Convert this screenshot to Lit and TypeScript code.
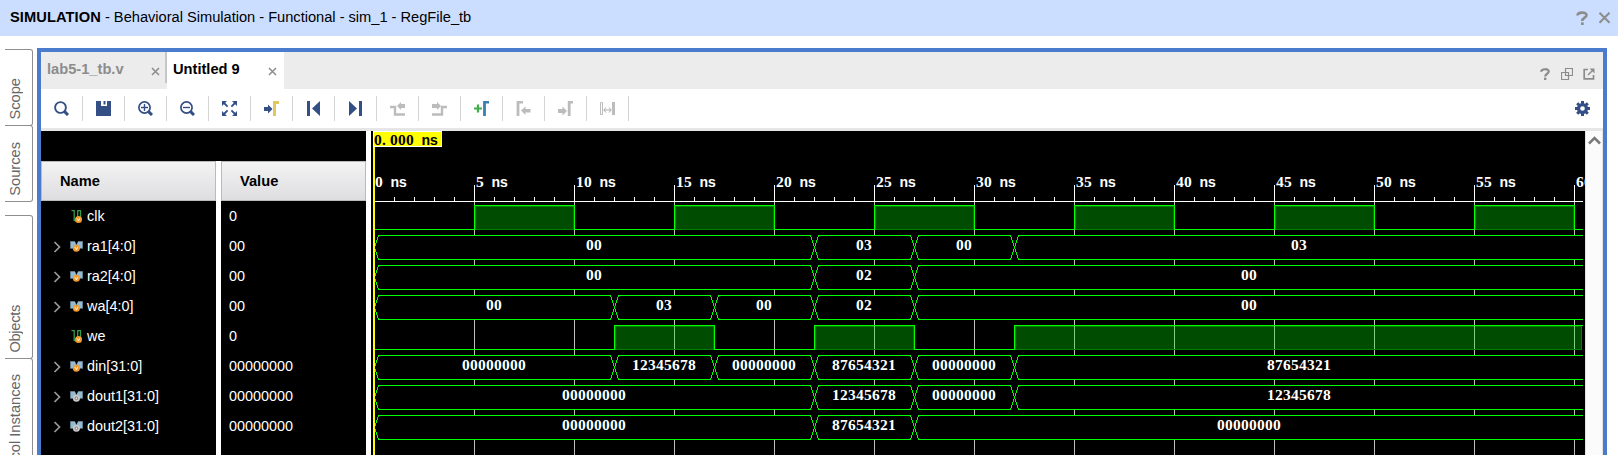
import { LitElement, html, svg, css } from "lit";
import { customElement, property } from "lit/decorators.js";

const NAVY = "#344f86";
const GRAY = "#bcbcbc";

const toolIcons = [
  svg`<circle cx="6.5" cy="6.5" r="5.4" fill="none" stroke=${NAVY} stroke-width="1.9"/><path d="M10.4 10.4 14 14" stroke=${NAVY} stroke-width="3"/>`,
  svg`<path d="M0 0H5V5H11V0H15V15H0Z" fill=${NAVY}/><path d="M7.500 0H9.500V3.500H7.500Z" fill=${NAVY}/>`,
  svg`<circle cx="6.5" cy="6.5" r="5.6" fill="none" stroke=${NAVY} stroke-width="1.7"/><path d="M10.6 10.6 14 14" stroke=${NAVY} stroke-width="3"/><path d="M3 6.500H10M6.500 3V10" stroke=${NAVY} stroke-width="1.4"/>`,
  svg`<circle cx="6.5" cy="6.5" r="5.6" fill="none" stroke=${NAVY} stroke-width="1.7"/><path d="M10.6 10.6 14 14" stroke=${NAVY} stroke-width="3"/><path d="M3 6.500H10" stroke=${NAVY} stroke-width="1.4"/>`,
  svg`<path d="M0 0H5L0 5ZM15 0V5L10 0ZM0 15V10L5 15ZM15 15H10L15 10Z" fill=${NAVY}/><path d="M2 2 5.600 5.600M13 2 9.400 5.600M2 13 5.600 9.400M13 13 9.400 9.400" stroke=${NAVY} stroke-width="1.8"/>`,
  svg`<path d="M0 6H4V3.500L8.500 8 4 12.500V10H0Z" fill=${NAVY}/><path d="M10.500 15V1.500H15" fill="none" stroke="#e0c75e" stroke-width="3"/>`,
  svg`<path d="M1 0H4V15H1ZM14 0V15L6 7.500Z" fill=${NAVY}/>`,
  svg`<path d="M1 0V15L9 7.500ZM11 0H14V15H11Z" fill=${NAVY}/>`,
  svg`<path d="M0 6H5V13.500H15" fill="none" stroke=${GRAY} stroke-width="2.400"/><path d="M7 5 11 1V3H15V7H11V9Z" fill=${GRAY}/>`,
  svg`<path d="M0 13.500H10V6H15" fill="none" stroke=${GRAY} stroke-width="2.400"/><path d="M9 5 5 1V3H0V7H5V9Z" fill=${GRAY}/>`,
  svg`<path d="M0 7.500H8M4 3.500V11.500" stroke="#3fae49" stroke-width="2.200"/><path d="M10.500 15V1.200H15" fill="none" stroke="#3b7fb0" stroke-width="2.800"/>`,
  svg`<path d="M2 15V1.200H7" fill="none" stroke=${GRAY} stroke-width="2.800"/><path d="M5 9.500 9.500 5.500V8H14.500V11.500H9.500V14Z" fill=${GRAY}/>`,
  svg`<path d="M11.200 15V1.200H15" fill="none" stroke=${GRAY} stroke-width="2.800"/><path d="M9 10 4.500 5.500V8H0V12H4.500V14.500Z" fill=${GRAY}/>`,
  svg`<path d="M.5 1.500H2.500V13.500H.5Z" fill="none" stroke=${GRAY}/><path d="M12 1H15V14H12Z" fill=${GRAY}/><path d="M4 9H11M6 6.500 3.800 9 6 11.500M9 6.500 11.200 9 9 11.500" fill="none" stroke="#a8a8a8"/>`,
];

interface Signal {
  name: string;
  value: string;
  kind: "bit" | "bus";
  port: "in" | "out";
  segs: [number, string][];
}

const signals: Signal[] = [
  { name: "clk", value: "0", kind: "bit", port: "in", segs: [[0, "0"], [5, "1"], [10, "0"], [15, "1"], [20, "0"], [25, "1"], [30, "0"], [35, "1"], [40, "0"], [45, "1"], [50, "0"], [55, "1"], [60, "0"]] },
  { name: "ra1[4:0]", value: "00", kind: "bus", port: "in", segs: [[0, "00"], [22, "03"], [27, "00"], [32, "03"]] },
  { name: "ra2[4:0]", value: "00", kind: "bus", port: "in", segs: [[0, "00"], [22, "02"], [27, "00"]] },
  { name: "wa[4:0]", value: "00", kind: "bus", port: "in", segs: [[0, "00"], [12, "03"], [17, "00"], [22, "02"], [27, "00"]] },
  { name: "we", value: "0", kind: "bit", port: "in", segs: [[0, "0"], [12, "1"], [17, "0"], [22, "1"], [27, "0"], [32, "1"]] },
  { name: "din[31:0]", value: "00000000", kind: "bus", port: "in", segs: [[0, "00000000"], [12, "12345678"], [17, "00000000"], [22, "87654321"], [27, "00000000"], [32, "87654321"]] },
  { name: "dout1[31:0]", value: "00000000", kind: "bus", port: "out", segs: [[0, "00000000"], [22, "12345678"], [27, "00000000"], [32, "12345678"]] },
  { name: "dout2[31:0]", value: "00000000", kind: "bus", port: "out", segs: [[0, "00000000"], [22, "87654321"], [27, "00000000"]] },
];

const badge = (port: string, x: number, y: number) =>
  port === "in"
    ? svg`<circle cx=${x} cy=${y} r="3.500" fill="#f29a2e"/><path d=${`M${x - 1.5} ${y - 1.5}L${x} ${y + 1.5}L${x + 1.5} ${y - 1.5}`} fill="none" stroke="#fff" stroke-width=".8"/>`
    : svg`<circle cx=${x} cy=${y} r="3.500" fill="#c9c9c9"/><circle cx=${x} cy=${y} r="1.300" fill="#eee" stroke="#777" stroke-width="1"/>`;

@customElement("wave-view")
export class WaveView extends LitElement {
  static styles = css`
    :host { display: block; background: #000; overflow: hidden; }
    svg { display: block; }
    text { font: bold 15.5px "Liberation Serif", serif; fill: #fff; white-space: pre; }
    .unit { font: bold 14.4px "Liberation Mono", monospace; }
    .dark { fill: #000; }
  `;

  // Canvas origin is the left edge of the view; time zero sits 3px in.
  private x(ns: number) {
    return 3 + ns * 20;
  }

  private label(str: string, x: number, y: number, cls = "") {
    const cut = str.indexOf(" ns");
    const digits = cut < 0 ? str : str.slice(0, cut);
    const pos = (n: number, from: number) => Array.from({ length: n }, (_, i) => from + i * 8).join(" ");
    return svg`<text class=${cls} y=${y} x=${pos(digits.length, x)}>${digits}${cut < 0 ? "" : svg`<tspan class="unit" x=${pos(3, x + digits.length * 8 - 0.5)}> ns</tspan>`}</text>`;
  }

  private bit(s: Signal, top: number) {
    const end = 1212;
    let line = "";
    const fills = s.segs.map(([t, v], i) => {
      const a = this.x(t) + 0.5;
      const last = i === s.segs.length - 1;
      const next = last ? 61 : s.segs[i + 1][0];
      const b = last ? end : this.x(next) + 0.5;
      const y = v === "1" ? top + 0.5 : top + 24.5;
      line += `${i ? "L" : "M"}${a} ${y}L${b} ${y}`;
      if (v !== "1") return null;
      const w = b - a - (last ? 1 : 0);
      const inner = Array.from({ length: 13 }, (_, k) => k * 5).filter((k) => k > t && k < next);
      return svg`<rect x=${a} y=${top + 0.5} width=${w} height="24" fill="#004c00"/>
        <rect x=${a + 1} y=${top + 1.5} width=${w - 2} height="23" fill="none" stroke="#008000"/>
        ${inner.map((k) => svg`<path d=${`M${this.x(k) + 0.5} ${top + 1}V${top + 25}`} stroke="#80cc80"/>`)}`;
    });
    return svg`${fills}<path d=${line} fill="none" stroke="#00ff00"/>
      ${s.segs.map(([t, v], i) => v === "1" ? svg`<path d=${`M${this.x(t) + 2} ${top + 24.5}H${(i < s.segs.length - 1 ? this.x(s.segs[i + 1][0]) : end - 1)}`} stroke="#008000"/>` : null)}`;
  }

  private bus(s: Signal, top: number) {
    const end = 1212;
    return s.segs.map(([t, v], i) => {
      const a = this.x(t) + 0.5;
      const last = i === s.segs.length - 1;
      const b = last ? end : this.x(s.segs[i + 1][0]) + 0.5;
      const y0 = top + 0.5;
      const y1 = top + 24.5;
      const right = last ? `H${b}M${b} ${y1}` : `H${b - 4}L${b} ${top + 12.5}L${b - 4} ${y1}`;
      return svg`<rect x=${a - 0.5} y=${top} width=${b - a + 1} height="25" fill="#000"/>
        <path d=${`M${a} ${top + 12.5}L${a + 4} ${y0}${right}H${a + 4}L${a} ${top + 12.5}`} fill="none" stroke="#00ff00"/>
        ${this.label(v, Math.round((a + b) / 2 - v.length * 4 - 0.5) + (last ? 1 : 0), top + 15)}`;
    });
  }

  render() {
    const ticks = Array.from({ length: 61 }, (_, i) => i);
    const major = ticks.filter((i) => i % 5 === 0);
    return html`<svg width="1214" height="324" shape-rendering="crispEdges">
      ${major.slice(1).map((i) => svg`<path d=${`M${this.x(i) + 0.5} 71V324`} stroke="#bebebe"/>`)}
      ${ticks.slice(1).map((i) => svg`<path d=${`M${this.x(i) + 0.5} ${i % 5 ? 66 : 54}V70`} stroke="#fff"/>`)}
      <path d="M3 70.500H1212" stroke="#fff"/>
      ${major.map((i) => this.label(`${i} ns`, this.x(i) + (i ? 2 : 1), 56))}
      ${signals.map((s, i) => (s.kind === "bit" ? this.bit(s, 74 + i * 30) : this.bus(s, 74 + i * 30)))}
      <rect x="2" y="1" width="2" height="323" fill="#ffff00"/>
      <rect x="2" y="0" width="69" height="16" fill="#fff"/>
      <rect x="3" y="1" width="67" height="14" fill="#ffff00"/>
      ${this.label("0.000 ns", 3, 14, "dark")}
    </svg>`;
  }
}

@customElement("signal-table")
export class SignalTable extends LitElement {
  static styles = css`
    :host { display: flex; flex-direction: column; background: #000; color: #fff; }
    .blank { height: 30px; }
    .cols { display: flex; flex: 1; gap: 5px; background: #fff; }
    .col { background: #000; }
    .name { width: 175px; }
    .value { width: 145px; }
    .head { box-sizing: border-box; height: 40px; border: 1px solid #b9babd; background: linear-gradient(#f3f3f4, #dedee1); color: #000; font-weight: bold; line-height: 38px; padding-left: 18px; }
    .row { display: flex; align-items: center; height: 30px; }
    .value .row { padding-left: 8px; }
    .cell { line-height: 30px; font-size: 14.4px; }
    .exp { width: 29px; height: 30px; flex: none; }
    .ico { width: 17px; height: 30px; flex: none; }
  `;

  private icon(s: Signal) {
    return s.kind === "bit"
      ? svg`<path d="M1.500 9.700H4.200V20M4.200 19.500H7.700V9.700H10.500V17" fill="none" stroke="#2f9e49" stroke-width="1.300"/>${badge(s.port, 8.5, 18.5)}`
      : svg`<path d="M.5 10.500H5L6.400 14 8 10.500H12.500V17.500H.5Z" fill="#93bcd4"/><path d="M.5 17.500V10.500H4.800M8.200 10.500H12.500V17.500" fill="none" stroke="#64808f"/>${badge(s.port, 6.400, 17.300)}`;
  }

  render() {
    return html`<div class="blank"></div>
      <div class="cols">
        <div class="col name">
          <div class="head">Name</div>
          ${signals.map((s) => html`<div class="row">
            <svg class="exp">${s.kind === "bus" ? svg`<path d="M13.500 11 18.500 16 13.500 21" fill="none" stroke="#9a9a9a" stroke-width="1.700"/>` : null}</svg>
            <svg class="ico">${this.icon(s)}</svg>
            <span class="cell">${s.name}</span>
          </div>`)}
        </div>
        <div class="col value">
          <div class="head">Value</div>
          ${signals.map((s) => html`<div class="row"><span class="cell">${s.value}</span></div>`)}
        </div>
      </div>`;
  }
}

@customElement("side-tab")
export class SideTab extends LitElement {
  @property() label = "";
  static styles = css`
    :host { box-sizing: border-box; flex: none; display: flex; align-items: flex-end; border: 1px solid #8e8e8e; border-left: 0; border-radius: 0 3px 3px 0; padding: 0 0 5px 0; color: #666; }
    .txt { writing-mode: vertical-rl; transform: rotate(180deg); white-space: nowrap; line-height: 20px; }
  `;
  render() {
    return html`<span class="txt">${this.label}</span>`;
  }
}

@customElement("app-root")
export class AppRoot extends LitElement {
  static styles = css`
    :host { display: flex; flex-direction: column; width: 1618px; height: 455px; overflow: hidden; background: #fff; color: #000; font: 14.67px "Liberation Sans", Arial, sans-serif; }
    .title { display: flex; align-items: center; height: 36px; flex: none; background: #ccdeff; padding: 0 7px 0 10px; }
    .title-text { flex: 1; white-space: pre; line-height: 34px; padding-bottom: 2px; letter-spacing: -.02px; }
    .title-text b { letter-spacing: .08px; }
    .title-icons { display: flex; gap: 9px; }
    .main { display: flex; flex: 1; min-height: 0; }
    .side { width: 28px; padding: 13px 4px 0 5px; display: flex; flex-direction: column; flex: none; }
    .t1 { height: 77px; }
    .t2 { height: 77px; margin-top: -1px; }
    .t3 { height: 144px; margin-top: 13px; letter-spacing: -.3px; }
    .t4 { height: 143px; margin-top: -1px; }
    .panel { box-sizing: border-box; width: 1570px; margin-top: 12px; border: 4px solid #4a7bcd; border-bottom: 0; display: flex; flex-direction: column; }
    .tabs { display: flex; height: 37px; flex: none; background: #ececec; }
    .tab { box-sizing: border-box; display: flex; align-items: center; justify-content: space-between; font-weight: bold; line-height: 34px; padding-bottom: 3px; }
    .tab svg { margin-top: 4px; }
    .idle { width: 126px; height: 31px; border-right: 2px solid #c6c6c6; padding: 3px 5px 0 6px; color: #8c8c8c; }
    .active { width: 117px; background: #fff; padding: 0 7px 3px 6px; }
    .tab-icons { display: flex; align-items: center; margin-left: auto; gap: 10px; padding: 7px 8px 0 0; }
    .tools { display: flex; align-items: center; height: 39px; flex: none; border-bottom: 3px solid #e6e6e6; }
    .tool { box-sizing: border-box; width: 42px; height: 25px; border-right: 1px solid #d4d4d4; display: flex; align-items: center; justify-content: center; }
    .gear { margin: 0 13px 0 auto; }
    .body { display: flex; flex: 1; min-height: 0; }
    signal-table { width: 325px; flex: none; }
    wave-view { width: 1214px; margin-left: 5px; flex: none; }
    .scroll { width: 16px; margin-left: auto; border-left: 1px solid #e4e4e4; border-right: 1px solid #e4e4e4; background: #fbfbfb; }
    svg { display: block; flex: none; }
  `;

  private close() {
    return html`<svg width="9" height="9"><path d="M1 1 8 8M8 1 1 8" stroke="#8c8c8c" stroke-width="1.500"/></svg>`;
  }

  render() {
    return html`
      <div class="title">
        <span class="title-text"><b>SIMULATION</b> - Behavioral Simulation - Functional - sim_1 - RegFile_tb</span>
        <div class="title-icons">
          <svg width="13" height="14"><path d="M1.500 4.500C1.500 .8 10.500 .6 10.500 4.200 10.500 6.700 6.200 6.500 6.200 10" fill="none" stroke="#8c8c8c" stroke-width="2.600"/><path d="M5 11.300H7.700V14H5Z" fill="#8c8c8c"/></svg>
          <svg width="13" height="14"><path d="M1.500 1.800 11.500 11.800M11.500 1.800 1.500 11.800" stroke="#8c8c8c" stroke-width="2"/></svg>
        </div>
      </div>
      <div class="main">
        <div class="side">
          <side-tab class="t1" label="Scope"></side-tab>
          <side-tab class="t2" label="Sources"></side-tab>
          <side-tab class="t3" label="Objects"></side-tab>
          <side-tab class="t4" label="Protocol Instances"></side-tab>
        </div>
        <div class="panel">
          <div class="tabs">
            <div class="tab idle">lab5-1_tb.v ${this.close()}</div>
            <div class="tab active">Untitled 9 ${this.close()}</div>
            <div class="tab-icons">
              <svg width="11" height="12"><path d="M1.200 3.800C1.200 .4 8.800 .4 8.800 3.600 8.800 5.800 5.200 5.800 5.200 8.500" fill="none" stroke="#8c8c8c" stroke-width="2.200"/><path d="M4 9.600H6.400V12H4Z" fill="#8c8c8c"/></svg>
              <svg width="12" height="12"><path d="M4.500 .5H11.500V7.500H4.500ZM.5 4.500H7.500V11.500H.5Z" fill="none" stroke="#8c8c8c" stroke-width="1.200"/></svg>
              <svg width="12" height="12"><path d="M5 1.500H1.200V10.800H10.500V7" fill="none" stroke="#8c8c8c" stroke-width="1.700"/><path d="M6.500 .5H11.500V5.500Z" fill="#8c8c8c"/><path d="M5 7 9.500 2.500" stroke="#8c8c8c" stroke-width="1.500"/></svg>
            </div>
          </div>
          <div class="tools">
            ${toolIcons.map((i) => html`<div class="tool"><svg width="15" height="15" viewBox="0 0 15 15">${i}</svg></div>`)}
            <svg class="gear" width="15" height="15" viewBox="0 0 15 15">
              <path d="M7.500 0V15M0 7.500H15M2.200 2.200 12.800 12.800M12.800 2.200 2.200 12.800" stroke=${NAVY} stroke-width="3"/>
              <circle cx="7.500" cy="7.500" r="5.500" fill=${NAVY}/><circle cx="7.500" cy="7.500" r="2.300" fill="#fff"/>
            </svg>
          </div>
          <div class="body">
            <signal-table></signal-table>
            <wave-view></wave-view>
            <div class="scroll"><svg width="16" height="16"><path d="M3 12.500 8.500 7 14 12.500" fill="none" stroke="#7a7a7a" stroke-width="2.500"/></svg></div>
          </div>
        </div>
      </div>`;
  }
}
